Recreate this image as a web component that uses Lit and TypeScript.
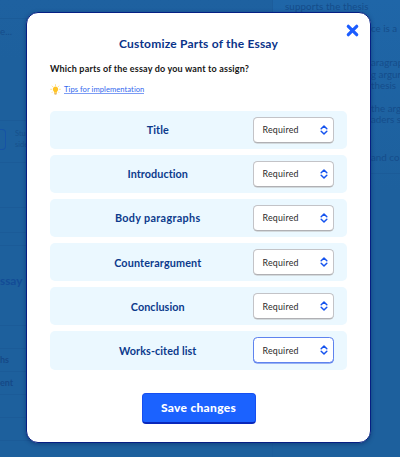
import { LitElement, html, css } from "lit";
import { customElement, property } from "lit/decorators.js";
import { classMap } from "lit/directives/class-map.js";

@customElement("part-row")
class PartRow extends LitElement {
  @property() label = "";
  @property({ type: Number }) spacing = 0;
  @property({ type: Boolean }) active = false;

  static styles = css`
    :host { display: block; }
    .row { box-sizing: border-box; height: 38.6px; border-radius: 5px; background: #ebf8ff; display: grid; grid-template-columns: 203px 81px; align-items: center; }
    .label { padding: 1px 0 0 12.5px; text-align: center; color: #0b3a8c; font-size: 10.8px; font-weight: 700; line-height: 14px; white-space: nowrap; }
    .select { box-sizing: border-box; height: 26px; border: 1px solid #c3c3c7; border-bottom-color: #b0b0b4; border-radius: 4.5px; background: #fff; box-shadow: 0 0.5px 0.5px #bbb; display: flex; align-items: center; justify-content: space-between; padding: 0 5px 0 8.5px; color: #2a2a2a; font-size: 8.8px; letter-spacing: 0.22px; }
    .select.active { border-color: #5f83ee; box-shadow: 0 0.5px 0.5px #456bea; }
    svg { display: block; width: 8px; height: 10px; }
  `;

  render() {
    return html`<div class="row">
      <div class="label" style="letter-spacing:${this.spacing}px">${this.label}</div>
      <div class=${classMap({ select: true, active: this.active })}>
        <span>Required</span>
        <svg viewBox="0 0 8 10" fill="none" stroke="#1553ee" stroke-width="1.5" stroke-linecap="round" stroke-linejoin="round"><path d="M1.2 3.7 4 1l2.8 2.7M1.2 6.3 4 9l2.8-2.7" /></svg>
      </div>
    </div>`;
  }
}

@customElement("app-root")
class AppRoot extends LitElement {
  static styles = css`
    :host { display: block; position: relative; width: 400px; height: 457px; overflow: hidden; font-family: Lato, "Noto Sans", sans-serif; }
    .page { height: 457px; display: grid; grid-template-columns: 272px 128px; background: linear-gradient(#1e61a0, #1d609d 60px); color: #154d8b; font-size: 9.8px; line-height: 11.5px; white-space: nowrap; }
    .left, .right { overflow: hidden; height: 457px; }
    .left > *, .right > * { box-sizing: border-box; }
    .line { border-bottom: 1px solid #1b5b98; }
    .s18 { height: 19px; }
    .typed { height: 102px; padding-top: 7px; }
    .field { height: 42px; display: flex; padding-top: 8px; gap: 9px; font-size: 7.5px; line-height: 10.5px; color: #17518c; }
    .input { box-sizing: border-box; width: 6px; height: 21px; border: 1px solid #1653a5; border-left: 0; border-radius: 0 4px 4px 0; }
    .s45 { height: 45px; }
    .s25 { height: 25px; }
    .s13 { height: 13px; }
    .heading { height: 80px; padding-top: 28px; font-size: 11.8px; line-height: 14px; font-weight: 700; color: #134c96; }
    .item { height: 23.3px; padding-top: 5px; font-size: 9px; font-weight: 700; color: #154987; }
    .s23 { height: 22.8px; }
    .right { background: linear-gradient(#1f66a8, #1d609d 190px); border-left: 1px solid #1c5d9c; box-sizing: border-box; }
    .top { padding: 1px 0 0 12px; height: 23px; letter-spacing: 0.1px; }
    .rest { padding-left: 98px; }
    .rest.g1 { height: 34px; }
    .rest.g2 { height: 45.5px; }
    .rest.g3 { height: 49.5px; }
    .rest.g4 { height: 22px; }
    .modal { position: absolute; box-sizing: border-box; left: 26px; top: 12px; width: 345px; height: 430.5px; border: 1.2px solid #061f83; border-radius: 12px; background: #fff; box-shadow: 0 1px 4px rgba(0, 25, 85, 0.45); display: flex; flex-direction: column; padding: 0 23px 0 23px; }
    .close { display: flex; justify-content: flex-end; height: 23px; padding-top: 11px; box-sizing: border-box; margin-right: -12px; }
    .close svg { width: 13px; height: 13px; flex: none; }
    h1 { margin: 0; text-align: center; color: #0a3389; font-size: 12px; line-height: 16px; letter-spacing: 0.2px; font-weight: 700; }
    .question { margin-top: 10px; height: 14px; line-height: 14px; font-size: 9px; font-weight: 700; color: #161616; letter-spacing: 0.17px; }
    .tip { display: flex; align-items: center; gap: 3px; margin-top: 6.5px; height: 14px; }
    .tip svg { width: 11px; height: 12px; }
    .link { color: #3469ee; font-size: 7.6px; line-height: 8.5px; letter-spacing: 0.05px; border-bottom: 1px solid #7d9df4; }
    .rows { display: flex; flex-direction: column; gap: 5.5px; margin-top: 14px; }
    .save { align-self: center; box-sizing: border-box; width: 114px; height: 31.5px; margin-top: 23px; border: 1px solid #164ff0; border-bottom: 2px solid #0927bb; border-radius: 4px; padding: 0; background: #1b62ff; color: #fff; font: 900 12px/27px Lato, "Noto Sans", sans-serif; letter-spacing: 0.3px; }
    h1, .save, .question, .link { font-variant-ligatures: none; }
  `;

  private parts = [
    { label: "Title", spacing: 0.1 },
    { label: "Introduction", spacing: 0.06 },
    { label: "Body paragraphs", spacing: 0.34 },
    { label: "Counterargument", spacing: 0.14 },
    { label: "Conclusion", spacing: 0.08 },
    { label: "Works-cited list", spacing: 0.08 },
  ];

  render() {
    return html`
      <div class="page">
        <div class="left">
          <div class="line s18"></div>
          <div class="line typed">e...</div>
          <div class="line field"><div class="input"></div><div>Stu<br />side</div></div>
          <div class="line s45"></div>
          <div class="line s25"></div>
          <div class="line s13"></div>
          <div class="line heading">ssay</div>
          <div class="line s23"></div>
          <div class="line item">hs</div>
          <div class="line item">ent</div>
          <div class="line s23"></div>
          <div class="line s23"></div>
        </div>
        <div class="right">
          <div class="top">supports the thesis</div>
          <div class="rest g1">ce is a</div>
          <div class="rest g2">aragrap<br />g argur<br />thesis</div>
          <div class="rest g3">the arg<br />aders s</div>
          <div class="line rest g4">and co</div>
        </div>
      </div>
      <div class="modal">
        <div class="close"><svg viewBox="0 0 13 13" fill="none" stroke="#1b5cff" stroke-width="3.2" stroke-linecap="round"><path d="m2.3 2.3 8.4 8.4m0-8.4-8.4 8.4" /></svg></div>
        <h1>Customize Parts of the Essay</h1>
        <div class="question">Which parts of the essay do you want to assign?</div>
        <div class="tip">
          <svg viewBox="0 0 11 12"><g fill="none" stroke="#ffd976" stroke-width=".8" stroke-linecap="round"><path d="M5.5.6v1M2.1 2l.7.7M8.9 2l-.7.7M.6 5.3h1M9.4 5.3h1M2.1 8.5l.6-.6M8.9 8.5l-.6-.6" /></g><path fill="#ffc426" d="M5.5 2.5a2.8 2.8 0 0 0-1.5 5.1v1.2h3V7.6a2.8 2.8 0 0 0-1.5-5.1Z" /><path fill="#dfa33a" d="M4.2 9.2h2.6v.8l-.7.6H4.9l-.7-.6Z" /></svg>
          <span class="link">Tips for implementation</span>
        </div>
        <div class="rows">
          ${this.parts.map((p, i) => html`<part-row .label=${p.label} .spacing=${p.spacing} .active=${i === this.parts.length - 1}></part-row>`)}
        </div>
        <button class="save">Save changes</button>
      </div>
    `;
  }
}
